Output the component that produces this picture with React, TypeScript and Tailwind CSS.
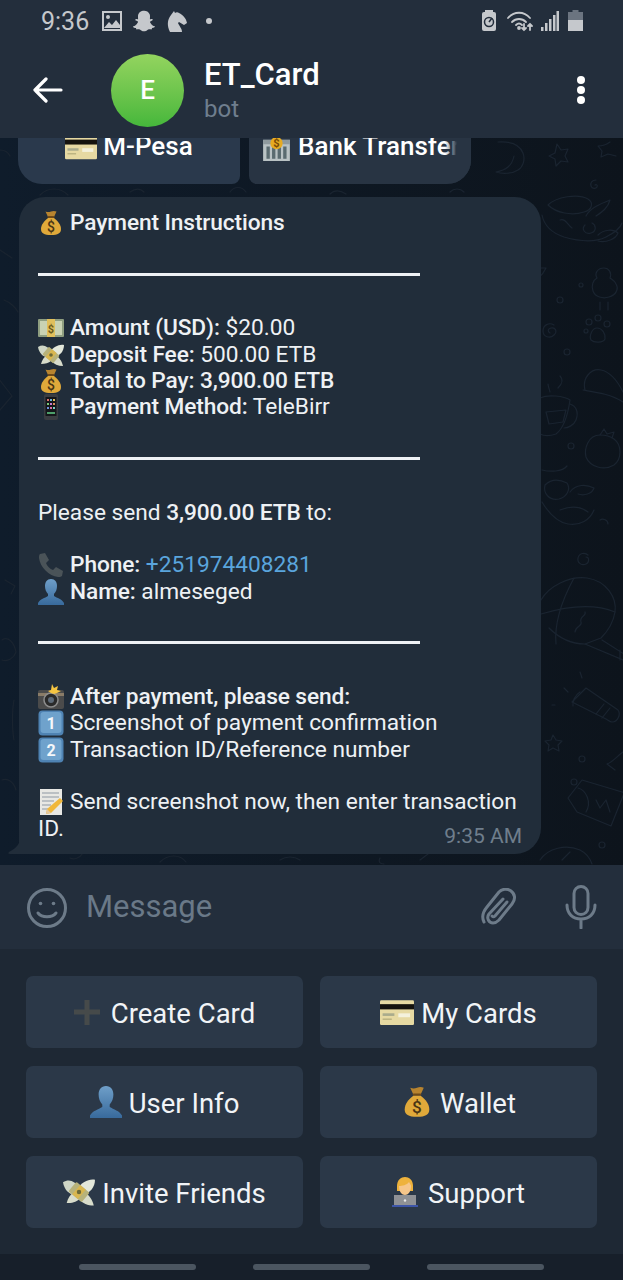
import { ReactNode } from 'react';
import { FaSnapchatGhost } from 'react-icons/fa';

const emojiClass = 'inline-block shrink-0 -my-2 align-[2px]';

const Card = ({ size = 26 }: { size?: number }) => (
  <svg width={size} height={size} viewBox="0 0 26 26" className={emojiClass}>
    <rect x="0" y="4" width="26" height="19" rx="1" fill="#e6d9a2" />
    <rect x="0" y="7" width="26" height="4" fill="#15130e" />
    <rect x="2" y="14" width="9" height="2" fill="#a9ab8c" />
    <rect x="14" y="14" width="9" height="3" fill="#f4f1dc" />
    <rect x="2" y="18" width="7" height="1" fill="#b4ad7c" />
  </svg>
);

const Bank = ({ size = 26 }: { size?: number }) => (
  <svg width={size} height={size} viewBox="0 0 26 26" className={emojiClass}>
    <rect x="1" y="7" width="24" height="19" fill="#b9c2c4" />
    <rect x="1" y="7" width="24" height="4" fill="#8f9a9e" />
    <rect x="4" y="13" width="3" height="11" fill="#5a6b70" />
    <rect x="9" y="13" width="3" height="11" fill="#5a6b70" />
    <rect x="14" y="13" width="3" height="11" fill="#5a6b70" />
    <rect x="19" y="13" width="3" height="11" fill="#5a6b70" />
    <circle cx="13" cy="10" r="5.500" fill="#e7ab22" />
    <text x="13" y="13.500" fontSize="10" fontWeight="700" textAnchor="middle" fill="#7a4c08" fontFamily="Roboto, sans-serif">$</text>
  </svg>
);

const MoneyBag = ({ size = 26 }: { size?: number }) => (
  <svg width={size} height={size} viewBox="0 0 26 26" className={emojiClass}>
    <path d="M7.500 1.500c2 .8 3.500.8 5.500 0s3.500-.8 5.500 0L16 7h-6z" fill="#b8842f" />
    <rect x="9.500" y="6" width="7" height="2" rx="1" fill="#6f4a18" />
    <path d="M10 8C6 11 3 15 3 19c0 4 3 6 10 6s10-2 10-6c0-4-3-8-7-11z" fill="#e0a93a" />
    <text x="13" y="22" fontSize="14" fontWeight="500" textAnchor="middle" fill="#4a3514" fontFamily="Roboto, sans-serif">$</text>
  </svg>
);

const Banknote = () => (
  <svg width="26" height="26" viewBox="0 0 26 26" className={emojiClass}>
    <rect x="0" y="4" width="26" height="18" rx="1" fill="#8f9e80" />
    <rect x="2" y="6" width="22" height="14" fill="#c9d2b3" />
    <rect x="9" y="4" width="8" height="18" fill="#e0bf5c" />
    <text x="13" y="17.500" fontSize="11" fontWeight="700" textAnchor="middle" fill="#6a5a1c" fontFamily="Roboto, sans-serif">$</text>
  </svg>
);

const MoneyWings = ({ size = 26 }: { size?: number }) => (
  <svg width={size} height={size} viewBox="0 0 26 26" className={emojiClass}>
    <path d="M0 5c5-3 10-1 13 5l-4 5C5 15 1 11 0 5z" fill="#cfd6c6" />
    <path d="M26 3c0 6-4 11-10 12l-4-5c3-5 9-8 14-7z" fill="#e3e7da" />
    <path d="M9 13l8 0c4 2 7 6 8 11-5 0-9-2-12-5-2 2-6 3-10 3 1-4 3-7 6-9z" fill="#d8dccb" />
    <rect x="6" y="8" width="14" height="10" rx="1" transform="rotate(40 13 13)" fill="#b7b27a" />
    <rect x="10" y="8" width="6" height="10" transform="rotate(40 13 13)" fill="#d8b64f" />
    <circle cx="13" cy="13" r="1.800" fill="#6d6a38" />
  </svg>
);

const Phone = () => (
  <svg width="26" height="26" viewBox="0 0 26 26" className={emojiClass}>
    <rect x="6" y="0" width="14" height="26" rx="2" fill="#3a3d42" />
    <rect x="7.500" y="3" width="11" height="19" fill="#14161a" />
    <rect x="9" y="5" width="2" height="2" fill="#d96d6d" />
    <rect x="12" y="5" width="2" height="2" fill="#6db2d9" />
    <rect x="15" y="5" width="2" height="2" fill="#e0c25e" />
    <rect x="9" y="9" width="2" height="2" fill="#79c97a" />
    <rect x="12" y="9" width="2" height="2" fill="#c47ad0" />
    <rect x="15" y="9" width="2" height="2" fill="#d98c5a" />
    <rect x="9" y="13" width="2" height="2" fill="#6d8fd9" />
    <rect x="12" y="13" width="2" height="2" fill="#d96da0" />
    <rect x="15" y="13" width="2" height="2" fill="#7ad0c4" />
    <rect x="9" y="18" width="8" height="2" fill="#4d9e6a" />
  </svg>
);

const Receiver = () => (
  <svg width="26" height="26" viewBox="0 0 26 26" className={emojiClass}>
    <path d="M2 2l5-1 4 7-3 3c1 3 4 6 7 7l3-3 7 4-1 5c-1 1-3 1-4 1C11 24 2 15 1 6c0-2 0-3 1-4z" fill="#4a5358" />
  </svg>
);

const Bust = ({ size = 26 }: { size?: number }) => (
  <svg width={size} height={size} viewBox="0 0 26 26" className={emojiClass}>
    <defs>
      <linearGradient id="bust" x1="0" y1="0" x2="0" y2="1">
        <stop offset="0" stopColor="#6f9fc9" />
        <stop offset="1" stopColor="#386a9c" />
      </linearGradient>
    </defs>
    <path d="M13 0c4 0 6 3 6 7 0 3-1 6-3 8v2c3 2 8 3 10 7v2H0v-2c2-4 7-5 10-7v-2C8 13 7 10 7 7c0-4 2-7 6-7z" fill="url(#bust)" />
  </svg>
);

const CameraFlash = () => (
  <svg width="26" height="26" viewBox="0 0 26 26" className={emojiClass}>
    <rect x="0" y="6" width="26" height="19" rx="2" fill="#4b4b4b" />
    <rect x="0" y="9" width="26" height="3" fill="#8a7c68" />
    <circle cx="13" cy="16" r="7" fill="#2a2a2a" stroke="#8d8d8d" strokeWidth="1.500" />
    <circle cx="13" cy="16" r="3" fill="#5d6a78" />
    <path d="M14 0l2 4 4-2-1 4 4 1-4 2-3 1-3-1-3-2 3-1z" fill="#f5c542" />
  </svg>
);

const Keycap = ({ n }: { n: string }) => (
  <svg width="26" height="26" viewBox="0 0 26 26" className={emojiClass}>
    <rect x="0.500" y="0.500" width="25" height="25" rx="4" fill="#4f83b3" />
    <rect x="2.500" y="2" width="21" height="21" rx="3" fill="#6fa2cc" />
    <text x="13" y="19" fontSize="16" fontWeight="700" textAnchor="middle" fill="#f4f7fa" fontFamily="Roboto, sans-serif">{n}</text>
  </svg>
);

const Memo = () => (
  <svg width="26" height="26" viewBox="0 0 26 26" className={emojiClass}>
    <rect x="2" y="0" width="22" height="26" fill="#e8e8e4" />
    <path d="M4 4h17M4 8h17M4 12h12M4 16h9M4 20h6" stroke="#8e98a3" strokeWidth="1" />
    <path d="M22 9l3 3-12 12-5 1 1-5z" fill="#f0b73a" />
    <path d="M8 25l1-5 4 4z" fill="#e3c8a0" />
  </svg>
);

const Plus = () => (
  <svg width="26" height="26" viewBox="0 0 26 26" className="mr-[4px] inline-block shrink-0">
    <path d="M10.500 1h5v9.500H26v5H15.500V26h-5V15.500H0v-5h10.500z" fill="#464a4a" />
  </svg>
);

const Technologist = () => (
  <svg width="26" height="30" viewBox="0 0 26 30" className="mr-[3px] inline-block shrink-0">
    <path d="M5 9c0-6 4-9 8-9s8 3 8 9v5H5z" fill="#eeb23c" />
    <path d="M7 9c3 0 8-1 10-4 1 2 2 3 2 4 0 6-3 9-6 9s-6-3-6-9z" fill="#f6c68a" />
    <path d="M5 18h16l3 3v9H2v-9z" fill="#3d55a8" />
    <rect x="2" y="18" width="22" height="11" fill="#8f9195" />
    <rect x="0" y="28" width="26" height="2" fill="#3d55a8" />
    <circle cx="13" cy="23.500" r="1.200" fill="#e8e8e8" />
  </svg>
);

const Wallpaper = () => (
  <svg className="absolute inset-0" width="623" height="727" viewBox="0 138 623 727" fill="none" stroke="#1a2430" strokeWidth="1.200" strokeLinecap="round" strokeLinejoin="round">
    {/* stars */}
    <path d="M557 144l4 6 7-1-3 7 3 6-7-1-5 5-1-7-6-3 6-3z" />
    <path d="M553 735l3 5 6 1-4 4 1 6-6-3-5 3 1-6-4-4 6-1z" />
    <path d="M610 142c-4 3-8 4-12 4l4 5-1 6 7-3 8 2" />
    {/* swirls */}
    <path d="M596 180c-4 0-6 3-5 6 1 3 5 3 6 1 1-2-1-3-2-2" />
    <path d="M554 325c-5-3-11 0-11 6s7 8 11 4 1-8-3-7-3 4-1 5" />
    <path d="M588 555c-3-3-9-2-10 3s4 8 8 6 3-7 0-7" />
    {/* teapot and fish */}
    <path d="M548 205c8-8 30-12 40-6 6 4 4 11-4 13-12 4-28 1-36-7z" />
    <path d="M542 215c2 10 10 18 22 22 14 4 30 6 42 0 8-4 14-8 16-14" />
    <path d="M560 220c6-2 8 6 12 8M586 216c4-8 14-12 24-16 -2 8-8 12-14 16" />
    <path d="M585 225c-4 4 0 10 6 8s5-8 1-10" />
    <path d="M598 235c6-6 16-6 20-2 -2 6-12 10-20 8" />
    {/* snake */}
    <path d="M498 142c30-2 30 22 20 28-6 4-16 4-22 2 10-2 16-6 18-16" />
    <path d="M540 268c-8 10-22 14-44 22l-4 4c22-4 46-8 54-26l-6 0z" />
    <circle cx="560" cy="300" r="3" />
    <circle cx="581" cy="285" r="2" />
    {/* chick */}
    <path d="M604 268c-6 0-10 5-7 10-4 2-6 8-4 13 2 6 10 8 16 6 7-2 10-8 7-13-2-4-5-5-6-6 2-5-1-10-6-10z" />
    <path d="M600 302v8M608 302v8" />
    {/* paw */}
    <path d="M597 328c-5 0-8 8-6 12 3 3 12 3 14-1 1-5-3-11-8-11z" />
    <circle cx="589" cy="322" r="3" />
    <circle cx="598" cy="318" r="3" />
    <circle cx="607" cy="324" r="3" />
    <circle cx="586" cy="331" r="2" />
    <circle cx="567" cy="352" r="3" />
    {/* shark fin */}
    <path d="M585 390c-3-12 6-22 16-20 10 2 18 14 22 22M583 390c12 2 28 4 40 12" />
    {/* cup */}
    <path d="M540 398c8-4 24-2 30 2 -2 14-6 28-14 34-6 2-12 2-16 0" />
    <path d="M570 404c6 2 9 8 6 16-2 5-8 8-12 8" />
    <path d="M546 412l20-2-3 12-14 2z" />
    <path d="M558 388c4-4 6-8 2-12M550 392c-1-4-2-6-2-8" />
    {/* strawberry */}
    <path d="M600 435c-12 0-16 14-14 22 4 10 18 14 28 8 8-6 8-20 0-26-4-3-9-4-14-4z" />
    <path d="M600 435l4-6 3 5 7-2-2 6" />
    <circle cx="571" cy="446" r="3" />
    <path d="M542 470c8 2 20 2 25-4M545 485c6-6 14-6 22-2 4 6 0 14-8 16-10 2-16-6-14-14z" />
    <path d="M570 492c6-8 16-8 24-4 -2 6-10 8-16 6" />
    {/* bear bottom */}
    <path d="M542 502c6 10 14 20 26 22 12 2 22-4 26-14" />
    <path d="M560 510c10-4 20-4 28 2" />
    <path d="M600 520c3-2 8 0 8 4" />
    {/* balloon */}
    <path d="M541 600c8-14 28-24 46-22 20 3 30 20 28 34-2 12-8 20-14 26l-16 6c-14 0-26-6-36-16" />
    <path d="M574 578c-12 22-20 44-18 66M541 614c20-6 50-12 74-2" />
    <path d="M602 640l22 14M585 644l38 16M620 650v10" />
    <path d="M585 612c2 4-6 4-4 10 2 4-6 4-6 10" />
    {/* flashlight */}
    <path d="M572 702l14-14 32 22c3 4 0 12-6 12-2 0-4-2-6-3z" />
    <path d="M580 692c-5 3-8 10-7 14M604 704l-8 10M610 708l-8 10" />
    <path d="M568 692l-4-4M582 678l-2-6M552 705h3" />
    <circle cx="582" cy="759" r="3" />
    {/* parcel */}
    <path d="M568 798l14-18 40 12c2 0 2 2 1 4l-12 30-34-14z" />
    <path d="M578 788c8 2 14 14 8 24M596 800l4 8 6-8 4 12" />
    <circle cx="574" cy="782" r="3" />
    <path d="M623 752c-6 4-10 10-16 12l8 6" />
    <circle cx="602" cy="845" r="3" />
    <path d="M540 860c8-12 26-16 40-10 6 3 10 8 12 14M562 860l8-8" />
    {/* left edge bits */}
    <path d="M0 150c4 0 8 2 10 6" />
    <path d="M-2 378l14 18-12 14" />
    <path d="M5 580l10 6-4 8M2 640c6-4 12 2 14 12-2 6-8 10-14 8M14 700c-2 10-2 30 0 40M2 780c6-2 12 2 14 10" />
    <path d="M0 250l12 8M4 300c6 2 12 8 14 12" />
    {/* below the bubble */}
    <path d="M70 858c4 2 10 0 12-4M160 862c8-8 20-8 26 0M280 860c6-4 14-4 20 0M380 858c-2 4 0 6 4 6M420 860l8-6" />
    {/* above the bubble */}
    <path d="M40 195c8-8 20-8 28 0M130 192c6-4 10-4 14 0M230 192c4-6 12-6 16 0M330 194c4-4 10-4 16 0M450 192c4-4 10-4 14 0" />
  </svg>
);

const Line = ({ children }: { children?: ReactNode }) => (
  <div className="min-h-[26.33px] leading-[26.33px]">{children}</div>
);

const Rule = () => (
  <div className="flex h-[26.33px] items-center pb-[3px]">
    <div className="h-[3px] w-[382px] bg-[#eef1f4]" />
  </div>
);

const Em = ({ children }: { children: ReactNode }) => (
  <span className="mr-[6px]">{children}</span>
);

const B = ({ children }: { children: ReactNode }) => (
  <span className="font-medium tracking-[-0.1px]">{children}</span>
);

const KeyButton = ({ icon, label }: { icon: ReactNode; label: string }) => (
  <button className="flex h-[72px] items-center justify-center gap-[7px] rounded-[7px] bg-[#2b3848] text-[27.5px] text-[#f1f4f7]">
    {icon}
    <span className="pt-[3px]">{label}</span>
  </button>
);

export default function App() {
  return (
    <div className="flex h-[1280px] w-[623px] flex-col overflow-hidden bg-[#0e151f] font-['Roboto',sans-serif]">
      {/* status bar + header */}
      <div className="relative z-10 h-[138px] shrink-0 bg-[#232e3c]">
        <div className="flex h-[42px] items-center pl-[41px] pr-[40px] text-[#c5c8cc]">
          <span className="text-[25px] leading-none">9:36</span>
          <svg width="20" height="20" viewBox="0 0 20 20" className="ml-[13px]">
            <rect x="1" y="1" width="18" height="18" fill="none" stroke="#c5c8cc" strokeWidth="2" />
            <circle cx="6" cy="6" r="2" fill="#c5c8cc" />
            <path d="M2 17l5-6 3 3 4-5 4 5v3z" fill="#c5c8cc" />
          </svg>
          <FaSnapchatGhost size={22} className="ml-[11px]" />
          <svg width="22" height="23" viewBox="0 0 22 23" fill="#c5c8cc" className="ml-[11px]">
            <path d="M4 22C1 16 1 10 5 5l3-4 1 2c1-1 3-1 4 0 4 2 7 5 8 10l-3 2-5-3-1 1c1 3 4 5 4 9z" />
          </svg>
          <span className="ml-[18px] h-[6px] w-[6px] rounded-full bg-[#c5c8cc]" />
          <div className="ml-auto flex items-center">
            <svg width="16" height="22" viewBox="0 0 16 22">
              <rect x="4" y="0" width="8" height="3" fill="#c5c8cc" />
              <rect x="1" y="2" width="14" height="19" rx="2" fill="#c5c8cc" />
              <circle cx="8" cy="12" r="4.500" fill="none" stroke="#232e3c" strokeWidth="1.500" />
              <path d="M8 12l3-4" stroke="#232e3c" strokeWidth="1.500" />
            </svg>
            <svg width="28" height="22" viewBox="0 0 28 22" className="ml-[10px]" fill="none" stroke="#c5c8cc" strokeWidth="1.800" strokeLinecap="round">
              <path d="M1 8c6-7 16-7 22 0" />
              <path d="M5 12c4-4 10-4 14 0" />
              <path d="M9 15c2-2 4-2 6 0" />
              <circle cx="12" cy="18" r="1" fill="#c5c8cc" />
              <path d="M17 14v6m-2-2l2 2 2-2M23 20v-6m-2 2l2-2 2 2" />
            </svg>
            <svg width="18" height="22" viewBox="0 0 18 22" className="ml-[6px]" fill="#c5c8cc">
              <rect x="0" y="17" width="2.500" height="4" />
              <rect x="4" y="13" width="2.500" height="8" />
              <rect x="8" y="9" width="2.500" height="12" />
              <rect x="12" y="5" width="2.500" height="16" />
              <rect x="15.500" y="1" width="2.500" height="20" />
            </svg>
            <svg width="15" height="22" viewBox="0 0 15 22" className="ml-[9px]">
              <rect x="4.500" y="0" width="6" height="3" fill="#6b7480" />
              <rect x="0" y="2" width="15" height="8" fill="#6b7480" />
              <rect x="0" y="10" width="15" height="11" fill="#c5c8cc" />
            </svg>
          </div>
        </div>
        <div className="relative flex h-[96px] items-center pl-[33px]">
          <svg width="30" height="26" viewBox="0 0 30 26" fill="none" stroke="#fff" strokeWidth="3.200" strokeLinecap="round" strokeLinejoin="round">
            <path d="M28 13H2M13 2L2 13l11 11" />
          </svg>
          <div className="ml-[48px] flex h-[73px] w-[73px] items-center justify-center rounded-full bg-linear-to-b from-[#93d45f] to-[#44b73b] text-[26px] font-medium text-white">
            E
          </div>
          <div className="ml-[20px] mt-[2px] flex flex-col">
            <span className="text-[31px] font-medium leading-[36px] text-white">ET_Card</span>
            <span className="text-[24px] leading-[32px] text-[#6f7e8e]">bot</span>
          </div>
          <div className="ml-auto mr-[38px] flex flex-col gap-[2px]">
            <span className="h-[8px] w-[8px] rounded-full bg-white" />
            <span className="h-[8px] w-[8px] rounded-full bg-white" />
            <span className="h-[8px] w-[8px] rounded-full bg-white" />
          </div>
        </div>
      </div>

      {/* chat */}
      <div className="relative flex min-h-0 flex-1 flex-col justify-end overflow-hidden bg-linear-to-r from-[#0f1c2b] to-[#0d141c] pb-[11px] pl-[19px]">
        <Wallpaper />
        <div className="relative flex shrink-0 gap-[9px] pb-[13px]">
          <div className="-ml-px flex h-[74px] w-[222px] items-center justify-center gap-[6px] rounded-b-[8px] rounded-bl-[24px] bg-[#2a394c] text-[26px] font-medium text-white">
            <Card size={32} />
            <span>M-Pesa</span>
          </div>
          <div className="relative flex h-[74px] w-[222px] items-center overflow-hidden rounded-b-[8px] rounded-br-[24px] bg-[#283443] pl-[13px] text-[26px] font-medium whitespace-nowrap text-white">
            <Bank size={29} />
            <span className="ml-[7px]">Bank Transfer</span>
            <div className="absolute right-0 top-0 h-full w-[14px] bg-[#283443]" />
            <div className="absolute right-[14px] top-0 h-full w-[12px] bg-linear-to-r from-[#283443]/0 to-[#283443]" />
          </div>
        </div>
        <div className="relative w-[522px] shrink-0 rounded-[26px] rounded-bl-none bg-[#212d3a] pb-[6.5px] pl-[19px] pr-[19px] pt-[13px] text-[22.7px] text-[#eef1f4]">
          <svg width="12" height="14" viewBox="0 0 12 14" className="absolute -left-[11px] bottom-0" fill="#212d3a">
            <path d="M12 0v14H2c-2 0-2-1-1-2 6-3 10-7 11-12z" />
          </svg>
          <Line><Em><MoneyBag /></Em><B>Payment Instructions</B></Line>
          <Line />
          <Rule />
          <Line />
          <Line><Em><Banknote /></Em><B>Amount (USD):</B> $20.00</Line>
          <Line><Em><MoneyWings /></Em><B>Deposit Fee:</B> 500.00 ETB</Line>
          <Line><Em><MoneyBag /></Em><B>Total to Pay: 3,900.00 ETB</B></Line>
          <Line><Em><Phone /></Em><B>Payment Method:</B> TeleBirr</Line>
          <Line />
          <Rule />
          <Line />
          <Line>Please send <B>3,900.00 ETB</B> to:</Line>
          <Line />
          <Line><Em><Receiver /></Em><B>Phone:</B> <span className="text-[#5aa5dd]">+251974408281</span></Line>
          <Line><Em><Bust /></Em><B>Name:</B> almeseged</Line>
          <Line />
          <Rule />
          <Line />
          <Line><Em><CameraFlash /></Em><B>After payment, please send:</B></Line>
          <Line><Em><Keycap n="1" /></Em>Screenshot of payment confirmation</Line>
          <Line><Em><Keycap n="2" /></Em>Transaction ID/Reference number</Line>
          <Line />
          <Line><Em><Memo /></Em>Send screenshot now, then enter transaction</Line>
          <div className="flex items-start justify-between">
            <span className="leading-[26.33px]">ID.</span>
            <span className="mt-[8px] text-[21px] leading-[24px] text-[#6f7e8c]">9:35 AM</span>
          </div>
        </div>
      </div>

      {/* message input */}
      <div className="flex h-[84px] shrink-0 items-center bg-[#232e3c] pl-[27px] pr-[26px]">
        <svg width="40" height="40" viewBox="0 0 40 40" fill="none" stroke="#6d7b89" strokeWidth="3" strokeLinecap="round" className="mt-[1px]">
          <circle cx="20" cy="20" r="18.500" />
          <circle cx="13.500" cy="15.500" r="1.800" fill="#6d7b89" stroke="none" />
          <circle cx="26.500" cy="15.500" r="1.800" fill="#6d7b89" stroke="none" />
          <path d="M11 25c4 5 14 5 18 0" />
        </svg>
        <span className="ml-[19px] text-[31px] text-[#6a7988]">Message</span>
        <svg width="36" height="40" viewBox="0 0 36 40" fill="none" stroke="#6d7b89" strokeWidth="3" strokeLinecap="round" strokeLinejoin="round" className="ml-auto mr-[48px] mt-[1px]">
          <path d="M22 11L8 26c-3 4 0 9 4 9 2 0 4-1 6-3l13-16c4-5 3-10-1-13s-9-2-12 1L6 19c-5 6-5 11-3 15" />
          <path d="M26 14L14 28c-1 1-2 1-3 0" />
        </svg>
        <svg width="32" height="44" viewBox="0 0 32 44" fill="none" stroke="#6d7b89" strokeWidth="3" strokeLinecap="round">
          <rect x="9" y="1.500" width="14" height="28" rx="7" />
          <path d="M2 20c0 9 6 14 14 14s14-5 14-14M16 34v9" />
        </svg>
      </div>

      {/* reply keyboard */}
      <div className="grid h-[305px] shrink-0 grid-cols-2 content-start gap-x-[17px] gap-y-[18px] bg-[#1e2834] px-[26px] pt-[27px]">
        <KeyButton icon={<Plus />} label="Create Card" />
        <KeyButton icon={<Card size={34} />} label="My Cards" />
        <KeyButton icon={<Bust size={32} />} label="User Info" />
        <KeyButton icon={<MoneyBag size={32} />} label="Wallet" />
        <KeyButton icon={<MoneyWings size={32} />} label="Invite Friends" />
        <KeyButton icon={<Technologist />} label="Support" />
      </div>

      {/* nav bar */}
      <div className="flex h-[26px] shrink-0 items-center justify-center gap-[57px] bg-[#171f2a]">
        <span className="h-[6px] w-[117px] rounded-full bg-[#4b5560]" />
        <span className="h-[6px] w-[117px] rounded-full bg-[#4b5560]" />
        <span className="h-[6px] w-[117px] rounded-full bg-[#4b5560]" />
      </div>
    </div>
  );
}
